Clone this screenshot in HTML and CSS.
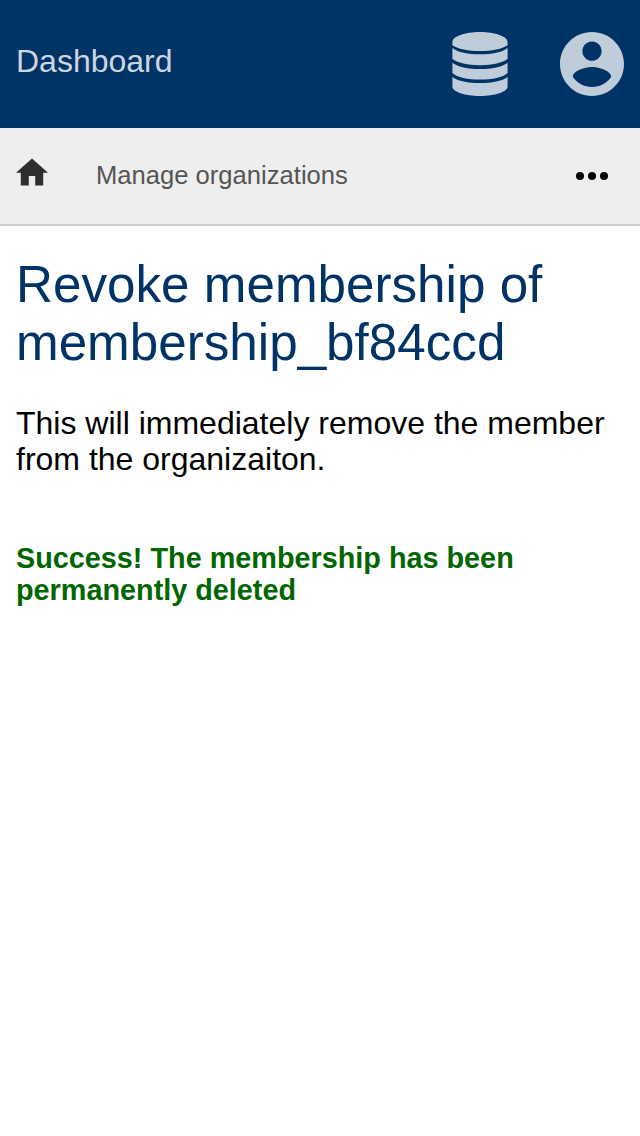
FILE: index.html
```html
<!DOCTYPE html>
<html lang="en">
<head>
<meta charset="utf-8">
<title>Dashboard</title>
<link rel="stylesheet" href="styles.css">
</head>
<body>
<header class="topbar">
  <span class="brand">Dashboard</span>
  <nav class="actions">
    <svg class="icon-data" viewBox="0 0 56 64"><path d="M.4 10C.4 4.500 12.800 0 28 0S55.600 4.500 55.600 10V13.200C50 17 40 19 28 19S6 17 .4 13.200ZM.4 16C6 20.500 16 22.300 28 22.300S50 20.500 55.600 16V26.800C51 31 40 33.200 28 33.200S5 31 .4 26.800ZM.4 30.700C6 35 16 37 28 37S50 35 55.600 30.700V41C51 45.500 40 47.600 28 47.600S5 45.500 .4 41ZM.4 45C6 49.300 16 51 28 51S50 49.300 55.600 45V54.500C55.600 59.800 43.200 64 28 64S.4 59.800 .4 54.500Z"/></svg>
    <svg class="icon-user" viewBox="2 2 20 20"><path d="M12 2C6.480 2 2 6.480 2 12s4.480 10 10 10 10-4.480 10-10S17.520 2 12 2zm0 3c1.660 0 3 1.340 3 3s-1.340 3-3 3-3-1.340-3-3 1.340-3 3-3zm0 14.200c-2.500 0-4.710-1.280-6-3.220.030-1.990 4-3.080 6-3.080 1.990 0 5.970 1.090 6 3.080-1.290 1.940-3.500 3.220-6 3.220z"/></svg>
  </nav>
</header>
<nav class="crumbs">
  <svg class="icon-home" viewBox="2 2.750 20 17.500"><path d="M10 20v-6h4v6h5v-8h3L12 3 2 12h3v8z"/></svg>
  <span class="crumb">Manage organizations</span>
  <svg class="icon-more" viewBox="0 0 32 8"><circle cx="4" cy="4" r="4"/><circle cx="16" cy="4" r="4"/><circle cx="28" cy="4" r="4"/></svg>
</nav>
<main class="content">
  <h1 class="title">Revoke membership of membership_bf84ccd</h1>
  <p class="text">This will immediately remove the member from the organizaiton.</p>
  <p class="success">Success! The membership has been permanently deleted</p>
</main>
</body>
</html>
```
FILE: styles.css
```css
* { box-sizing: border-box; }
body { margin: 0; background: #fff; color: #000; font-family: "Liberation Sans", Arial, sans-serif; }
.topbar { display: flex; justify-content: space-between; align-items: center; height: 128px; padding: 0 16px; background: #003366; }
.brand { padding-bottom: 6px; font-size: 32px; line-height: 36px; color: #ccd6e0; }
.actions { display: flex; gap: 52px; fill: #bfccd9; }
.icon-data { width: 56px; height: 64px; }
.icon-user { width: 64px; height: 64px; }
.crumbs { display: flex; align-items: center; height: 98px; padding: 0 32px 0 16px; background: #eee; border-bottom: 2px solid #ccc; }
.icon-home { width: 32px; height: 28px; margin-bottom: 8px; fill: #2e2e2e; }
.crumb { margin-left: 48px; margin-bottom: 2px; font-size: 25.600px; color: #555; }
.icon-more { width: 32px; height: 8px; margin-left: auto; }
.content { padding: 30px 16px; }
.title { margin: 0 0 33px; font-size: 51.200px; line-height: 58px; font-weight: 400; color: #003366; }
.text { margin: 0 0 65px; font-size: 32px; line-height: 36px; }
.success { margin: 0; font-size: 28.800px; line-height: 32px; font-weight: 700; color: #060; }
```
